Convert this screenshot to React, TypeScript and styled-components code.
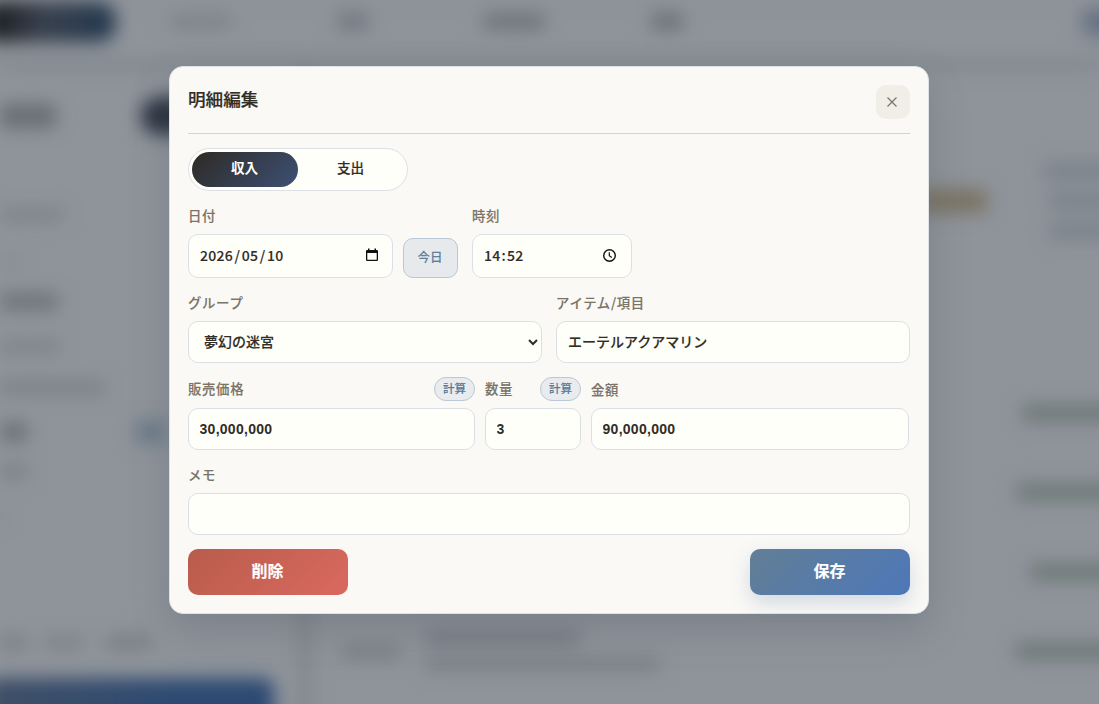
import React from "react";
import styled, { createGlobalStyle } from "styled-components";

const Global = createGlobalStyle`
  * { box-sizing: border-box; }
  html, body { margin: 0; height: 100%; overflow: hidden; background: #8f949b; }
  body, button, input, select { font-family: "Noto Sans CJK JP", sans-serif; }
`;

const Screen = styled.div`
  position: relative;
  width: 1099px;
  height: 704px;
  overflow: hidden;
  background: #8f949b;
`;

/* page behind the dialog */
const Page = styled.div`
  height: 704px;
  display: flex;
  flex-direction: column;
  filter: blur(9px);
`;
const Bar = styled.span<{ w: number; h?: number; c?: string; ml?: number; r?: number }>`
  display: block;
  flex: none;
  width: ${(p) => p.w}px;
  height: ${(p) => p.h ?? 13}px;
  margin-left: ${(p) => p.ml ?? 0}px;
  border-radius: ${(p) => p.r ?? 3}px;
  background: ${(p) => p.c ?? "#7b8086"};
`;
const Nav = styled.nav`
  flex: none;
  height: 60px;
  padding-bottom: 17px;
  display: flex;
  align-items: center;
  box-shadow: 0 5px 12px #747b82;
`;
const NavPill = styled.span`
  flex: none;
  width: 134px;
  height: 40px;
  margin-left: -18px;
  border-radius: 18px;
  background: linear-gradient(100deg, #1c1f25 12%, #38404d 45%, #22384f);
`;
const Columns = styled.div`
  flex: 1;
  display: flex;
`;
const Sidebar = styled.aside`
  flex: none;
  width: 298px;
  padding-top: 8px;
  display: flex;
  flex-direction: column;
`;
const Line = styled.div<{ h: number }>`
  flex: none;
  height: ${(p) => p.h}px;
  display: flex;
  align-items: center;
`;
const WideButton = styled.div`
  flex: none;
  width: 288px;
  height: 70px;
  margin: 25px 0 0 -14px;
  border-radius: 10px;
  background: linear-gradient(90deg, #3f4f66, #2d4a73 70%);
`;
const Divider = styled.div`
  flex: none;
  width: 14px;
  background: #82878d;
`;
const Main = styled.main`
  flex: 1;
  min-width: 0;
  padding-top: 3px;
  display: flex;
  flex-direction: column;
`;

/* dialog */
const Overlay = styled.div`
  position: absolute;
  inset: 0;
  display: flex;
  justify-content: center;
  align-items: flex-start;
  padding: 66px 1px 0 0;
`;
const Dialog = styled.section`
  width: 760px;
  height: 548px;
  padding: 18px;
  border: 1px solid #dfe3e8;
  border-radius: 14px;
  background: #faf9f6;
  box-shadow: 0 16px 40px rgba(60, 72, 78, 0.24);
  display: flex;
  flex-direction: column;
  gap: 14px;
  color: #302d26;
  -webkit-text-stroke: 0.12px currentColor;
`;
const Header = styled.header`
  height: 49px;
  display: flex;
  justify-content: space-between;
  border-bottom: 1px solid #d5d4c8;
`;
const Title = styled.h2`
  margin: 0;
  font-size: 17.6px;
  line-height: 28px;
  font-weight: 500;
  -webkit-text-stroke: 0.2px currentColor;
`;
const CloseButton = styled.button`
  width: 34px;
  height: 34px;
  padding: 0 2px 0 0;
  border: 0;
  border-radius: 10px;
  background: #f1eee8;
  color: #77736a;
  display: grid;
  place-items: center;
`;
const Toggle = styled.div`
  width: 220px;
  height: 43px;
  padding: 3px;
  border: 1px solid #dddfe7;
  border-radius: 22px;
  background: #fffffa;
  display: flex;
`;
const ToggleOption = styled.button<{ $active?: boolean }>`
  flex: 1;
  height: 35px;
  padding: 0 1px 5px 0;
  border: 0;
  border-radius: 18px;
  font-size: 13.6px;
  font-weight: ${(p) => (p.$active ? 700 : 500)};
  -webkit-text-stroke: ${(p) => (p.$active ? 0 : 0.15)}px currentColor;
  color: ${(p) => (p.$active ? "#fff" : "#302d26")};
  background: ${(p) => (p.$active ? "linear-gradient(135deg, #2d2a25, #3e5075)" : "transparent")};
`;
const Row = styled.div<{ $cols: string; $gap: number }>`
  display: grid;
  grid-template-columns: ${(p) => p.$cols};
  column-gap: ${(p) => p.$gap}px;
  align-items: end;
`;
const DateGroup = styled.div`
  display: grid;
  grid-template-columns: 205px 55px;
  column-gap: 10px;
  align-items: end;
`;
const Field = styled.div`
  display: flex;
  flex-direction: column;
  gap: 7px;
`;
const LabelRow = styled.div<{ $tall?: boolean }>`
  height: ${(p) => (p.$tall ? 24 : 22)}px;
  display: flex;
  align-items: center;
  justify-content: space-between;
`;
const Label = styled.label`
  font-size: 13.4px;
  line-height: 20px;
  padding-bottom: 2px;
  font-weight: 500;
  letter-spacing: 0.05em;
  color: #7a7366;
`;
const Input = styled.input<{ $numeric?: boolean }>`
  width: 100%;
  height: 42px;
  padding: 0 11px 2px;
  border: 1px solid #dddfe7;
  border-radius: 10px;
  background: #fffffa;
  color: #302d26;
  font-size: 14px;
  font-weight: 500;
  outline: 0;
  -webkit-text-stroke: 0.15px currentColor;
  ${(p) =>
    p.$numeric &&
    `font-family: "Liberation Sans", sans-serif; font-weight: 700; letter-spacing: 0.02em; padding: 0 10.5px; -webkit-text-stroke: 0;`}
`;
const PickerBox = styled.div`
  height: 44px;
  padding: 0 13px 2px 10px;
  border: 1px solid #dddfe7;
  border-radius: 10px;
  background: #fffffa;
  display: flex;
  align-items: center;
  justify-content: space-between;
  font-size: 14px;
  font-weight: 500;
  color: #302d26;
  svg { color: #111; }
`;
const Parts = styled.span`
  letter-spacing: 0.02em;
  span { padding: 0 1px; }
`;
const Slash = styled.i`
  padding: 0 0.5px;
  font-style: normal;
`;
const Select = styled.select`
  width: 100%;
  height: 42px;
  padding: 0 0 2px 11px;
  border: 1px solid #dddfe7;
  border-radius: 10px;
  background: #fffffa;
  color: #302d26;
  font-size: 14px;
  font-weight: 500;
  -webkit-text-stroke: 0.15px currentColor;
`;
const TodayButton = styled.button`
  height: 40px;
  padding: 0 1px 3px 0;
  border: 1px solid #b9c7d6;
  border-radius: 10px;
  background: #e7eaed;
  color: #627f9a;
  font-size: 12.5px;
  font-weight: 500;
  -webkit-text-stroke: 0.1px currentColor;
`;
const Chip = styled.button`
  width: 41px;
  height: 24px;
  padding: 0 0 2px;
  border: 1px solid #b9c7d6;
  border-radius: 12px;
  background: #e9ecee;
  color: #5a7a94;
  font-size: 11.5px;
  line-height: 20px;
  font-weight: 500;
  -webkit-text-stroke: 0.1px currentColor;
`;
const Footer = styled.footer`
  display: flex;
  justify-content: space-between;
`;
const ActionButton = styled.button<{ $danger?: boolean }>`
  width: 160px;
  height: 46px;
  padding: 0 1px 5px 0;
  border: 0;
  border-radius: 10px;
  color: #fff;
  font-size: 16px;
  font-weight: 700;
  background: ${(p) =>
    p.$danger
      ? "linear-gradient(135deg, #b85c4d, #da695e)"
      : "linear-gradient(135deg, #627f96, #4d77b8)"};
  box-shadow: ${(p) => (p.$danger ? "none" : "0 8px 20px rgba(84, 119, 158, 0.24)")};
`;

const CalendarIcon = () => (
  <svg width="14" height="14" viewBox="0 0 14 14" fill="currentColor">
    <path fillRule="evenodd" d="M3 .5h1.5V2h5V.5H11V2h1q1 0 1 1v9q0 1-1 1H2q-1 0-1-1V3q0-1 1-1h1zM2.3 5v6.7h9.4V5z" />
  </svg>
);
const ClockIcon = () => (
  <svg width="15" height="15" viewBox="0 0 15 15" fill="none" stroke="currentColor">
    <circle cx="6.5" cy="7.5" r="5.8" strokeWidth="1.4" />
    <path d="M6.3 4.2v3.6l2.5 1.7" strokeWidth="1.2" />
  </svg>
);
const CloseIcon = () => (
  <svg width="10" height="10" viewBox="0 0 10 10" fill="none" stroke="currentColor" strokeWidth="1.15">
    <path d="M.5.5l9 9M9.5.5l-9 9" />
  </svg>
);

const Background = () => (
  <Page aria-hidden>
    <Nav>
      <NavPill />
      <Bar w={62} ml={54} />
      <Bar w={32} h={17} ml={105} c="#737780" />
      <Bar w={62} h={17} ml={114} c="#707479" />
      <Bar w={32} h={17} ml={106} c="#6b7077" />
      <Bar w={40} h={26} ml={398} r={12} c="#647080" />
    </Nav>
    <Columns>
      <Sidebar>
        <Line h={20} />
        <Line h={56}>
          <Bar w={56} h={24} c="#696d73" />
          <Bar w={80} h={38} ml={85} r={19} c="#2b3341" />
        </Line>
        <Line h={49} />
        <Line h={42}><Bar w={64} c="#7d8287" /></Line>
        <Line h={56}><Bar w={22} h={10} c="#858a90" /></Line>
        <Line h={20}><Bar w={58} h={17} c="#6d7277" /></Line>
        <Line h={70}><Bar w={60} c="#7d8287" /></Line>
        <Line h={12}><Bar w={105} c="#7a7f84" /></Line>
        <Line h={78}>
          <Bar w={28} h={18} c="#6b6f74" />
          <Bar w={30} h={22} ml={108} c="#697987" />
        </Line>
        <Line h={0}><Bar w={28} c="#797e86" /></Line>
        <Line h={92}><Bar w={3} h={14} c="#6f7478" /></Line>
        <Line h={68} />
        <Line h={22}>
          <Bar w={28} c="#787d82" />
          <Bar w={40} ml={16} c="#7c8186" />
          <Bar w={44} ml={22} c="#767b80" />
        </Line>
        <WideButton />
      </Sidebar>
      <Divider />
      <Main>
        <Line h={92} />
        <Line h={92}>
          <Bar w={70} h={24} ml={605} c="#7a7363" />
          <Line h={92}>
            <div>
              <Line h={30}><Bar w={80} h={18} ml={56} c="#7b838b" /></Line>
              <Line h={30}><Bar w={80} h={18} ml={62} c="#7b838b" /></Line>
              <Line h={30}><Bar w={80} h={18} ml={62} c="#7b838b" /></Line>
            </div>
          </Line>
        </Line>
        <Line h={126} />
        <Line h={79}><Bar w={110} h={18} ml={710} c="#6f7a78" /></Line>
        <Line h={80}><Bar w={110} h={18} ml={704} c="#6f7a78" /></Line>
        <Line h={80}><Bar w={110} h={18} ml={718} c="#6f7a78" /></Line>
        <Line h={78}>
          <Bar w={58} ml={30} c="#787d81" />
          <Line h={52}>
            <div>
              <Line h={26}><Bar w={155} h={14} ml={25} c="#757a82" /></Line>
              <Line h={26}><Bar w={235} ml={25} c="#797e84" /></Line>
            </div>
          </Line>
          <Bar w={110} h={18} ml={355} c="#6f7a78" />
        </Line>
      </Main>
    </Columns>
  </Page>
);

export default function App() {
  return (
    <>
      <Global />
      <Screen>
        <Background />
        <Overlay>
          <Dialog role="dialog" aria-modal="true">
            <Header>
              <Title>明細編集</Title>
              <CloseButton aria-label="閉じる"><CloseIcon /></CloseButton>
            </Header>
            <Toggle>
              <ToggleOption $active>収入</ToggleOption>
              <ToggleOption>支出</ToggleOption>
            </Toggle>
            <Row $cols="270px 160px" $gap={14}>
              <DateGroup>
                <Field>
                  <LabelRow><Label>日付</Label></LabelRow>
                  <PickerBox>
                    <Parts><span>2026</span><Slash>/</Slash><span>05</span><Slash>/</Slash><span>10</span></Parts>
                    <CalendarIcon />
                  </PickerBox>
                </Field>
                <TodayButton>今日</TodayButton>
              </DateGroup>
              <Field>
                <LabelRow><Label>時刻</Label></LabelRow>
                <PickerBox>
                  <Parts><span>14</span>:<span>52</span></Parts>
                  <ClockIcon />
                </PickerBox>
              </Field>
            </Row>
            <Row $cols="1fr 1fr" $gap={14}>
              <Field>
                <LabelRow><Label>グループ</Label></LabelRow>
                <Select defaultValue="a"><option value="a">夢幻の迷宮</option></Select>
              </Field>
              <Field>
                <LabelRow><Label>アイテム/項目</Label></LabelRow>
                <Input defaultValue="エーテルアクアマリン" />
              </Field>
            </Row>
            <Row $cols="287px 96px 318px" $gap={10}>
              <Field>
                <LabelRow $tall><Label>販売価格</Label><Chip>計算</Chip></LabelRow>
                <Input $numeric defaultValue="30,000,000" />
              </Field>
              <Field>
                <LabelRow $tall><Label>数量</Label><Chip>計算</Chip></LabelRow>
                <Input $numeric defaultValue="3" />
              </Field>
              <Field>
                <LabelRow><Label>金額</Label></LabelRow>
                <Input $numeric defaultValue="90,000,000" />
              </Field>
            </Row>
            <Field>
              <LabelRow><Label>メモ</Label></LabelRow>
              <Input defaultValue="" />
            </Field>
            <Footer>
              <ActionButton $danger>削除</ActionButton>
              <ActionButton>保存</ActionButton>
            </Footer>
          </Dialog>
        </Overlay>
      </Screen>
    </>
  );
}
